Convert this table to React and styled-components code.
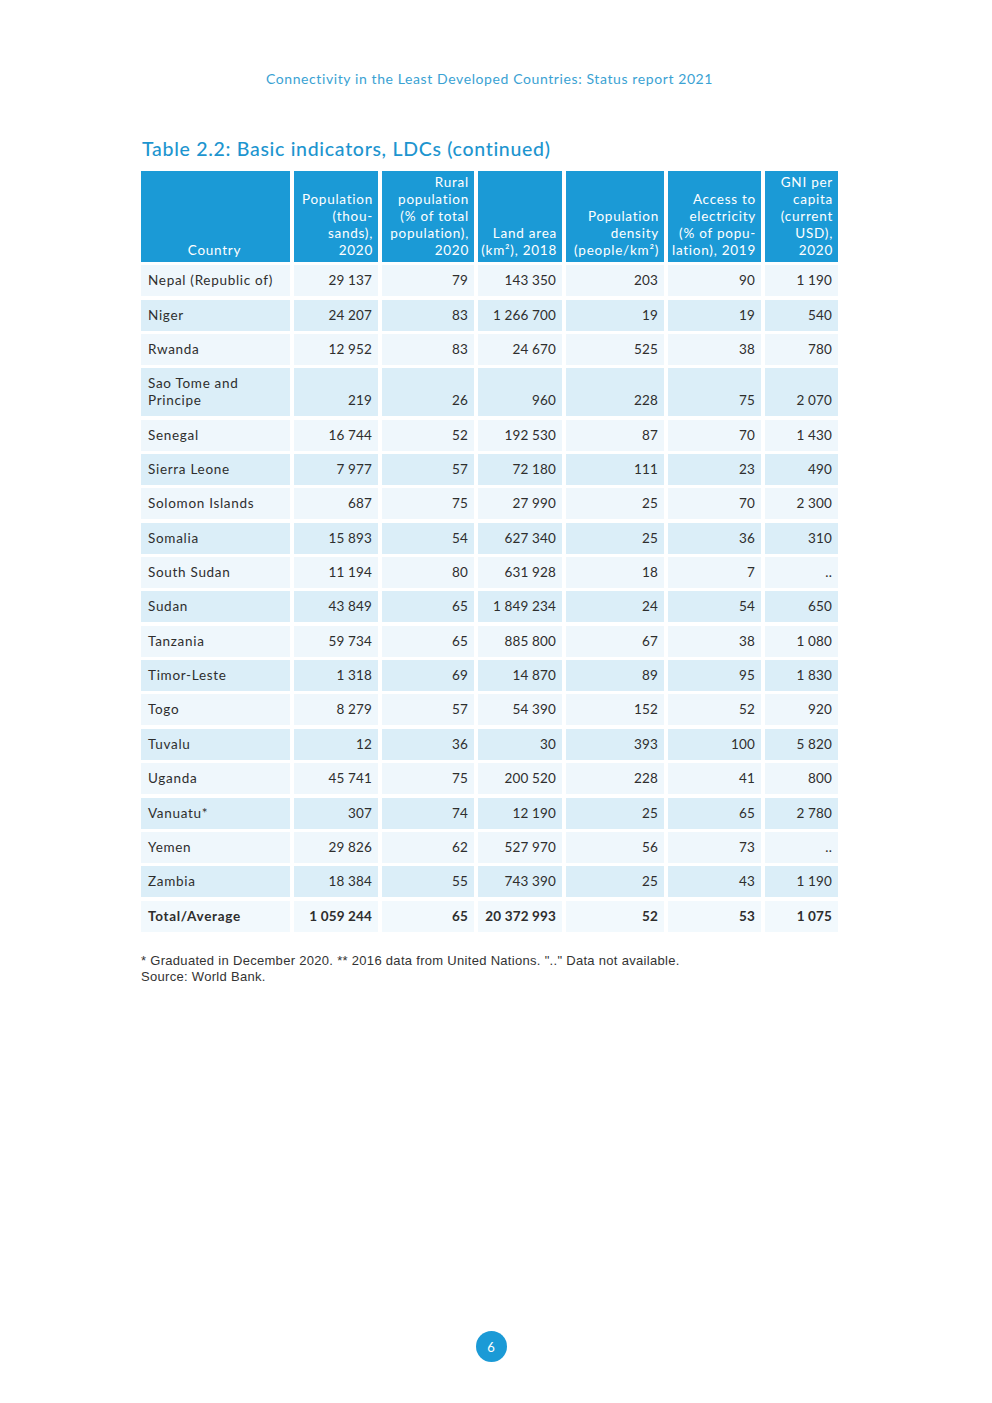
import React from "react";
import styled, { createGlobalStyle } from "styled-components";

const GlobalStyle = createGlobalStyle`
  html, body { margin: 0; padding: 0; background: #ffffff; }
  body { font-family: Lato, "Open Sans", sans-serif; }
`;

const Page = styled.div`
  width: 992px;
  min-height: 1403px;
  box-sizing: border-box;
  display: flex;
  flex-direction: column;
  padding: 70px 0 41px 141px;
`;

const Content = styled.div`
  width: 697px;
  display: flex;
  flex-direction: column;
  flex: 1;
`;

const RunningHead = styled.div`
  text-align: center;
  color: #3aa2d3;
  font-size: 14px;
  letter-spacing: 0.6px;
  line-height: 18px;
`;

const Title = styled.h2`
  margin: 49px 0 0 1px;
  color: #1d95cf;
  font-size: 19.5px;
  font-weight: 500;
  letter-spacing: 0.7px;
  line-height: 24px;
`;

const Table = styled.div`
  margin-top: 10px;
  display: flex;
  flex-direction: column;
  gap: 3.35px;
`;

const Row = styled.div`
  display: grid;
  grid-template-columns: 149px 84px 92px 84px 98px 93px 73px;
  column-gap: 4px;
`;

const HeadCell = styled.div`
  background: #1b9ad6;
  color: #ffffff;
  font-size: 13.5px;
  letter-spacing: 0.75px;
  line-height: 17px;
  height: 91px;
  box-sizing: border-box;
  padding: 3px 5px 3px 3px;
  display: flex;
  flex-direction: column;
  justify-content: flex-end;
  text-align: ${(p) => (p.$center ? "center" : "right")};
  white-space: nowrap;
`;

const Cell = styled.div`
  background: ${(p) => (p.$total ? "#f2f9fd" : p.$shade ? "#dbeef8" : "#eff7fc")};
  color: #2e2e2e;
  font-size: 13.5px;
  letter-spacing: ${(p) => (p.$left ? "0.7px" : "0.15px")};
  line-height: 17px;
  min-height: 31px;
  box-sizing: border-box;
  padding: 7px 6px 7px 7px;
  display: flex;
  flex-direction: column;
  justify-content: flex-end;
  text-align: ${(p) => (p.$left ? "left" : "right")};
  font-weight: ${(p) => (p.$bold ? 700 : 400)};
  white-space: nowrap;
`;

const Notes = styled.div`
  margin-top: 21px;
  font-family: "Liberation Sans", Arial, sans-serif;
  font-size: 13px;
  line-height: 16px;
  color: #333333;
  letter-spacing: 0.3px;
`;

const Footer = styled.div`
  margin-top: auto;
  display: flex;
  justify-content: center;
  padding-left: 3px;
`;

const PageNumber = styled.div`
  width: 31px;
  height: 31px;
  border-radius: 50%;
  background: #1b9ad6;
  color: #ffffff;
  font-size: 13px;
  display: flex;
  align-items: center;
  justify-content: center;
`;

const headers = [
  ["Country"],
  ["Population", "(thou-", "sands),", "2020"],
  ["Rural", "population", "(% of total", "population),", "2020"],
  ["Land area", "(km²), 2018"],
  ["Population", "density", "(people/km²)"],
  ["Access to", "electricity", "(% of popu-", "lation), 2019"],
  ["GNI per", "capita", "(current", "USD),", "2020"],
];

const rows = [
  [["Nepal (Republic of)"], "29 137", "79", "143 350", "203", "90", "1 190"],
  [["Niger"], "24 207", "83", "1 266 700", "19", "19", "540"],
  [["Rwanda"], "12 952", "83", "24 670", "525", "38", "780"],
  [["Sao Tome and", "Principe"], "219", "26", "960", "228", "75", "2 070"],
  [["Senegal"], "16 744", "52", "192 530", "87", "70", "1 430"],
  [["Sierra Leone"], "7 977", "57", "72 180", "111", "23", "490"],
  [["Solomon Islands"], "687", "75", "27 990", "25", "70", "2 300"],
  [["Somalia"], "15 893", "54", "627 340", "25", "36", "310"],
  [["South Sudan"], "11 194", "80", "631 928", "18", "7", ".."],
  [["Sudan"], "43 849", "65", "1 849 234", "24", "54", "650"],
  [["Tanzania"], "59 734", "65", "885 800", "67", "38", "1 080"],
  [["Timor-Leste"], "1 318", "69", "14 870", "89", "95", "1 830"],
  [["Togo"], "8 279", "57", "54 390", "152", "52", "920"],
  [["Tuvalu"], "12", "36", "30", "393", "100", "5 820"],
  [["Uganda"], "45 741", "75", "200 520", "228", "41", "800"],
  [["Vanuatu*"], "307", "74", "12 190", "25", "65", "2 780"],
  [["Yemen"], "29 826", "62", "527 970", "56", "73", ".."],
  [["Zambia"], "18 384", "55", "743 390", "25", "43", "1 190"],
];

const total = ["1 059 244", "65", "20 372 993", "52", "53", "1 075"];

export default function App() {
  return (
    <>
      <GlobalStyle />
      <Page>
        <Content>
          <RunningHead>
            Connectivity in the Least Developed Countries: Status report 2021
          </RunningHead>
          <Title>Table 2.2: Basic indicators, LDCs (continued)</Title>
          <Table>
            <Row>
              {headers.map((lines, i) => (
                <HeadCell key={i} $center={i === 0}>
                  {lines.map((l, j) => (
                    <span key={j}>{l}</span>
                  ))}
                </HeadCell>
              ))}
            </Row>
            {rows.map(([name, ...vals], r) => (
              <Row key={r}>
                <Cell $left $shade={r % 2 === 1}>
                  {name.map((l, j) => (
                    <span key={j}>{l}</span>
                  ))}
                </Cell>
                {vals.map((v, c) => (
                  <Cell key={c} $shade={r % 2 === 1}>
                    {v}
                  </Cell>
                ))}
              </Row>
            ))}
            <Row>
              <Cell $left $bold $total>
                Total/Average
              </Cell>
              {total.map((v, c) => (
                <Cell key={c} $bold $total>
                  {v}
                </Cell>
              ))}
            </Row>
          </Table>
          <Notes>
            <div>
              * Graduated in December 2020. ** 2016 data from United Nations. ".." Data not available.
            </div>
            <div>Source: World Bank.</div>
          </Notes>
          <Footer>
            <PageNumber>6</PageNumber>
          </Footer>
        </Content>
      </Page>
    </>
  );
}
